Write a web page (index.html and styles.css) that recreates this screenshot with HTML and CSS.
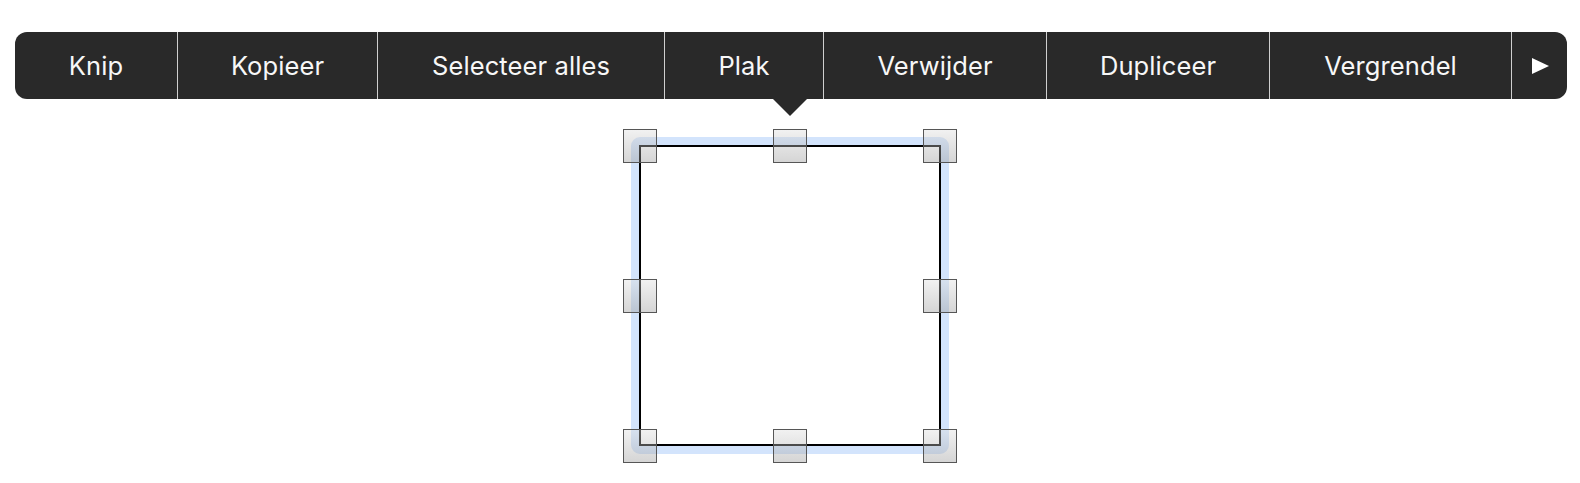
FILE: index.html
```html
<!DOCTYPE html>
<html lang="nl">
<head>
<meta charset="utf-8">
<title>Bewerkmenu</title>
<link rel="stylesheet" href="styles.css">
</head>
<body>
<div class="page">
  <div class="menu-wrap">
    <nav class="menu">
      <button class="item">Knip</button>
      <button class="item">Kopieer</button>
      <button class="item">Selecteer alles</button>
      <button class="item">Plak</button>
      <button class="item">Verwijder</button>
      <button class="item">Dupliceer</button>
      <button class="item">Vergrendel</button>
      <button class="item more" aria-label="Meer"><span class="tri"></span></button>
    </nav>
    <span class="pointer"></span>
  </div>
  <div class="canvas">
    <div class="halo"></div>
    <div class="shape"></div>
    <span class="handle h-tl"></span>
    <span class="handle h-tc"></span>
    <span class="handle h-tr"></span>
    <span class="handle h-ml"></span>
    <span class="handle h-mr"></span>
    <span class="handle h-bl"></span>
    <span class="handle h-bc"></span>
    <span class="handle h-br"></span>
  </div>
</div>
</body>
</html>
```

FILE: styles.css
```css
* { box-sizing: border-box; }
html, body {
  margin: 0;
  padding: 0;
  background: #ffffff;
  font-family: Inter, "Noto Sans", "Liberation Sans", sans-serif;
}
.page {
  width: 1580px;
  height: 483px;
  padding-top: 32px;
  padding-left: 15px;
  position: relative;
}
.menu-wrap {
  position: relative;
  width: 1552px;
}
.menu {
  display: grid;
  grid-template-columns: 162px 200px 287px 159px 223px 223px 242px 56px;
  height: 67px;
  background: #292929;
  border-radius: 12px;
  overflow: hidden;
}
.item {
  appearance: none;
  border: 0;
  margin: 0;
  padding: 0;
  background: transparent;
  color: #f7f7f7;
  font-family: inherit;
  font-size: 25.5px;
  font-weight: 400;
  letter-spacing: 0.1px;
  display: flex;
  align-items: center;
  justify-content: center;
  border-left: 1px solid #cfcfcf;
}
.item:first-child { border-left: 0; }
.tri {
  width: 0;
  height: 0;
  border-top: 8px solid transparent;
  border-bottom: 8px solid transparent;
  border-left: 17px solid #ffffff;
  margin-left: 2px;
}
.pointer {
  position: absolute;
  left: 758px;
  top: 67px;
  width: 0;
  height: 0;
  border-left: 17px solid transparent;
  border-right: 17px solid transparent;
  border-top: 17px solid #292929;
}
.canvas {
  position: absolute;
  left: 0;
  top: 0;
  width: 1580px;
  height: 483px;
  pointer-events: none;
}
.halo {
  position: absolute;
  left: 631px;
  top: 137px;
  width: 318px;
  height: 317px;
  border: 9px solid #d3e4fc;
  border-radius: 9px;
}
.shape {
  position: absolute;
  left: 639px;
  top: 145px;
  width: 302px;
  height: 301px;
  border: 2px solid #000000;
  background: #ffffff;
}
.handle {
  position: absolute;
  width: 34px;
  height: 34px;
  margin-left: -17px;
  margin-top: -17px;
  border: 1px solid #565656;
  background: linear-gradient(to bottom, rgba(220,220,220,0.4), rgba(150,150,150,0.4));
}
.h-tl { left: 640px; top: 146px; }
.h-tc { left: 790px; top: 146px; }
.h-tr { left: 940px; top: 146px; }
.h-ml { left: 640px; top: 296px; }
.h-mr { left: 940px; top: 296px; }
.h-bl { left: 640px; top: 446px; }
.h-bc { left: 790px; top: 446px; }
.h-br { left: 940px; top: 446px; }
```
